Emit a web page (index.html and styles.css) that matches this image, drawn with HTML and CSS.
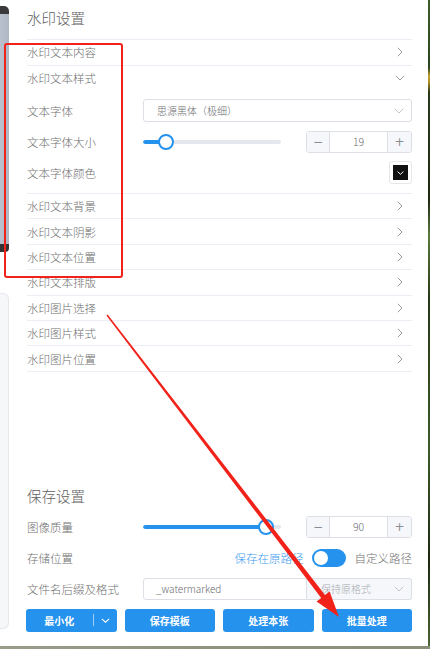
FILE: index.html
```html
<!DOCTYPE html>
<html lang="zh-CN">
<head>
<meta charset="utf-8">
<title>水印设置</title>
<link rel="stylesheet" href="styles.css">
</head>
<body>
<div class="screen">
  <div class="side">
    <div class="side-top"></div>
    <div class="side-mid"></div>
    <div class="side-bottom"></div>
    <div class="side-panel"></div>
  </div>
  <div class="panel">
    <div class="title">水印设置</div>
    <div class="collapse">
      <div class="item"><div class="head"><span>水印文本内容</span><svg class="chev-r" width="6" height="10" viewBox="0 0 6 10"><polyline points="0.8,0.8 5,5 0.8,9.2"/></svg></div></div>
      <div class="item">
        <div class="head"><span>水印文本样式</span><svg class="chev-d" width="10" height="6" viewBox="0 0 10 6"><polyline points="0.8,0.8 5,5 9.2,0.8"/></svg></div>
        <div class="content">
          <div class="frow">
            <span class="lbl">文本字体</span>
            <div class="select"><span>思源黑体（极细）</span><svg class="chev-s" width="10" height="6" viewBox="0 0 10 6"><polyline points="0.8,0.8 5,5 9.2,0.8"/></svg></div>
          </div>
          <div class="frow">
            <span class="lbl">文本字体大小</span>
            <div class="slider"><div class="track"><div class="fill" style="width:16.7%"></div></div><div class="thumb" style="left:16.7%"></div></div>
            <div class="num"><span class="nb minus">−</span><span class="val">19</span><span class="nb plus">+</span></div>
          </div>
          <div class="frow">
            <span class="lbl">文本字体颜色</span>
            <div class="color"><span class="swatch"><svg width="7" height="4" viewBox="0 0 7 4"><polyline points="0.6,0.6 3.5,3.3 6.4,0.6"/></svg></span></div>
          </div>
        </div>
      </div>
      <div class="item"><div class="head"><span>水印文本背景</span><svg class="chev-r" width="6" height="10" viewBox="0 0 6 10"><polyline points="0.8,0.8 5,5 0.8,9.2"/></svg></div></div>
      <div class="item"><div class="head"><span>水印文本阴影</span><svg class="chev-r" width="6" height="10" viewBox="0 0 6 10"><polyline points="0.8,0.8 5,5 0.8,9.2"/></svg></div></div>
      <div class="item"><div class="head"><span>水印文本位置</span><svg class="chev-r" width="6" height="10" viewBox="0 0 6 10"><polyline points="0.8,0.8 5,5 0.8,9.2"/></svg></div></div>
      <div class="item"><div class="head"><span>水印文本排版</span><svg class="chev-r" width="6" height="10" viewBox="0 0 6 10"><polyline points="0.8,0.8 5,5 0.8,9.2"/></svg></div></div>
      <div class="item"><div class="head"><span>水印图片选择</span><svg class="chev-r" width="6" height="10" viewBox="0 0 6 10"><polyline points="0.8,0.8 5,5 0.8,9.2"/></svg></div></div>
      <div class="item"><div class="head"><span>水印图片样式</span><svg class="chev-r" width="6" height="10" viewBox="0 0 6 10"><polyline points="0.8,0.8 5,5 0.8,9.2"/></svg></div></div>
      <div class="item"><div class="head"><span>水印图片位置</span><svg class="chev-r" width="6" height="10" viewBox="0 0 6 10"><polyline points="0.8,0.8 5,5 0.8,9.2"/></svg></div></div>
    </div>

    <div class="save">
      <div class="stitle">保存设置</div>
      <div class="srow">
        <span class="lbl">图像质量</span>
        <div class="slider"><div class="track"><div class="fill" style="width:89%"></div></div><div class="thumb" style="left:89%"></div></div>
        <div class="num"><span class="nb minus">−</span><span class="val">90</span><span class="nb plus">+</span></div>
      </div>
      <div class="srow">
        <span class="lbl">存储位置</span>
        <div class="loc">
          <span class="loc-on">保存在原路径</span>
          <span class="toggle"><span class="knob"></span></span>
          <span class="loc-off">自定义路径</span>
        </div>
      </div>
      <div class="srow">
        <span class="lbl">文件名后缀及格式</span>
        <div class="fname">
          <div class="finput">_watermarked</div>
          <div class="fselect"><span>保持原格式</span><svg class="chev-s" width="10" height="6" viewBox="0 0 10 6"><polyline points="0.8,0.8 5,5 9.2,0.8"/></svg></div>
        </div>
      </div>
      <div class="btns">
        <div class="btn split"><span class="bmain">最小化</span><span class="bsep"></span><span class="bdrop"><svg width="9" height="5" viewBox="0 0 9 5"><polyline points="0.8,0.8 4.5,4.2 8.2,0.8"/></svg></span></div>
        <div class="btn">保存模板</div>
        <div class="btn">处理本张</div>
        <div class="btn">批量处理</div>
      </div>
    </div>
  </div>
  <div class="edge"></div>
</div>
<div class="bottom-strip"></div>

<div class="annot-box"></div>
<svg class="annot-arrow" width="430" height="649" viewBox="0 0 430 649">
  <polygon points="106.4,315.5 321.2,597.9 316.6,601.6 339,617 329.6,591.4 325.0,595.0 107.6,314.5"/>
</svg>
</body>
</html>
```

FILE: styles.css
```css
html, body {
  margin: 0;
  padding: 0;
}
body {
  width: 430px;
  height: 649px;
  overflow: hidden;
  background: #fff;
  position: relative;
  font-family: "Noto Sans CJK SC", "Noto Sans", sans-serif;
  font-weight: 300;
  color: #707070;
}

.screen {
  display: flex;
  height: 646px;
}

/* left desktop strip */
.side {
  width: 9px;
  flex: none;
  display: flex;
  flex-direction: column;
}
.side-top {
  height: 8px;
  margin-top: 6px;
  background: #3a3a3c;
  border-top-right-radius: 5px;
}
.side-mid {
  height: 230px;
  background: linear-gradient(90deg, #b9c1ce, #aeb6c4);
}
.side-bottom {
  height: 8px;
  background: #333;
  border-bottom-right-radius: 4px;
}
.side-panel {
  margin-top: 41px;
  height: 334px;
  background: #f6f7f9;
  border: 1px solid #e6e8ec;
  border-left: none;
  border-radius: 0 6px 6px 0;
}

/* right photo edge */
.edge {
  width: 2px;
  flex: none;
  background: linear-gradient(180deg, #3e5c2a 0, #2c4420 68px, #c2a22e 76px, #b08f25 82px, #2a3a1c 92px, #1e2a14 200px, #5c7a3c 235px, #263818 300px, #3e5a2a 450px, #1c2812 560px, #4a6434 646px);
}

.bottom-strip {
  height: 3px;
  background: linear-gradient(90deg, #9a9c8a, #8e9480 50%, #8a8f78);
}

/* main panel */
.panel {
  flex: 1;
  padding: 0 16px 0 18px;
  display: flex;
  flex-direction: column;
}
.title {
  height: 39.3px;
  line-height: 36px;
  font-size: 14.5px;
  color: #5e5e5e;
}

.collapse {
  border-top: 1px solid #ebeef5;
}
.item {
  border-bottom: 1px solid #ebeef5;
}
.head {
  height: 24.4px;
  display: flex;
  align-items: center;
  justify-content: space-between;
  font-size: 11.5px;
  color: #707070;
  padding-right: 9px;
}
.chev-r polyline, .chev-d polyline {
  fill: none;
  stroke: #9a9a9a;
  stroke-width: 1;
}
.chev-d {
  margin-right: -2px;
}
.chev-s polyline {
  fill: none;
  stroke: #c0c4cc;
  stroke-width: 1;
}

.content {
  padding: 9px 0 9px;
  display: flex;
  flex-direction: column;
  gap: 8px;
}
.frow {
  display: flex;
  align-items: center;
  height: 23px;
}
.lbl {
  width: 116px;
  flex: none;
  font-size: 11.5px;
  color: #707070;
}

.select {
  flex: 1;
  height: 23px;
  box-sizing: border-box;
  border: 1px solid #dcdfe6;
  border-radius: 3px;
  display: flex;
  align-items: center;
  justify-content: space-between;
  padding: 0 7px 0 13px;
  font-size: 10px;
  color: #6a6c70;
}

/* slider */
.slider {
  width: 138px;
  height: 16px;
  flex: none;
  position: relative;
}
.track {
  position: absolute;
  left: 0;
  right: 0;
  top: 6px;
  height: 4px;
  border-radius: 2px;
  background: #e4e7ed;
  overflow: hidden;
}
.fill {
  height: 100%;
  background: #2592ee;
  border-radius: 2px;
}
.thumb {
  position: absolute;
  top: 0;
  width: 16px;
  height: 16px;
  margin-left: -8px;
  box-sizing: border-box;
  border: 2px solid #2592ee;
  border-radius: 50%;
  background: #fff;
}

/* number input */
.num {
  margin-left: auto;
  width: 106px;
  height: 22px;
  box-sizing: border-box;
  border: 1px solid #dcdfe6;
  border-radius: 3px;
  display: flex;
  overflow: hidden;
}
.nb {
  width: 22px;
  flex: none;
  background: #f5f7fa;
  display: flex;
  align-items: center;
  justify-content: center;
  font-size: 12px;
  color: #8a8d93;
  font-family: "DejaVu Sans", sans-serif;
  font-weight: 400;
}
.minus {
  border-right: 1px solid #dcdfe6;
}
.plus {
  width: 23px;
  border-left: 1px solid #dcdfe6;
}
.val {
  flex: 1;
  text-align: center;
  line-height: 20px;
  font-size: 10.5px;
  color: #6a6c70;
}

/* color picker */
.color {
  margin-left: auto;
  width: 23px;
  height: 23px;
  box-sizing: border-box;
  border: 1px solid #e4e6ea;
  border-radius: 3px;
  padding: 3px;
}
.swatch {
  width: 15px;
  height: 15px;
  background: #111;
  display: flex;
  align-items: center;
  justify-content: center;
}
.swatch polyline {
  fill: none;
  stroke: #fff;
  stroke-width: 1;
}

/* save section */
.save {
  margin-top: 112px;
}
.stitle {
  height: 24px;
  line-height: 24px;
  font-size: 14.5px;
  color: #5e5e5e;
}
.srow {
  display: flex;
  align-items: center;
  height: 22px;
  margin-top: 9px;
}
.srow:nth-child(2) {
  margin-top: 8px;
}
.loc {
  margin-left: auto;
  display: flex;
  align-items: center;
  gap: 8px;
  font-size: 11.5px;
}
.loc-on {
  color: #3d9af0;
}
.loc-off {
  color: #707070;
  margin-left: 1px;
}
.toggle {
  width: 34px;
  height: 18px;
  border-radius: 9px;
  background: #2592ee;
  display: flex;
  align-items: center;
  padding-left: 2px;
  box-sizing: border-box;
}
.knob {
  width: 14px;
  height: 14px;
  border-radius: 50%;
  background: #fff;
}

.fname {
  flex: 1;
  display: flex;
  height: 22px;
}
.finput {
  width: 164px;
  box-sizing: border-box;
  border: 1px solid #dcdfe6;
  border-radius: 3px 0 0 3px;
  padding-left: 12px;
  line-height: 20px;
  font-size: 10px;
  color: #6a6c70;
}
.fselect {
  flex: 1;
  box-sizing: border-box;
  border: 1px solid #dcdfe6;
  border-left: none;
  border-radius: 0 3px 3px 0;
  background: #f5f7fa;
  display: flex;
  align-items: center;
  justify-content: space-between;
  padding: 0 7px 0 14px;
  font-size: 10px;
  color: #a8abb2;
}

.btns {
  display: flex;
  gap: 8px;
  margin-top: 9px;
  margin-left: -1px;
}
.btn {
  flex: 1;
  height: 23px;
  border-radius: 3px;
  background: #2592ee;
  color: #fff;
  font-size: 10px;
  font-weight: bold;
  display: flex;
  align-items: center;
  justify-content: center;
}
.split {
  justify-content: flex-start;
}
.bmain {
  flex: 1;
  text-align: center;
}
.bsep {
  width: 1px;
  height: 12px;
  background: rgba(255, 255, 255, 0.55);
}
.bdrop {
  width: 23px;
  display: flex;
  align-items: center;
  justify-content: center;
}
.bdrop polyline {
  fill: none;
  stroke: #fff;
  stroke-width: 1.1;
}

/* red annotations */
.annot-box {
  position: absolute;
  left: 4px;
  top: 43px;
  width: 119px;
  height: 235px;
  box-sizing: border-box;
  border: 2px solid #f0221a;
  border-radius: 3px;
}
.annot-arrow {
  position: absolute;
  left: 0;
  top: 0;
  pointer-events: none;
}
.annot-arrow polygon {
  fill: #f0221a;
}
```
